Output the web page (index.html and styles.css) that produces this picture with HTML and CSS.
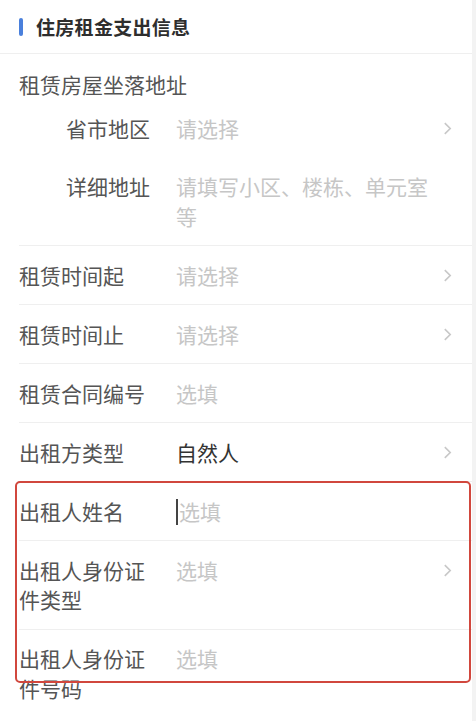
FILE: index.html
```html
<!DOCTYPE html>
<html lang="zh-CN">
<head>
    <meta charset="UTF-8">
    <meta name="viewport" content="width=device-width, initial-scale=1.0">
    <title>住房租金支出信息</title>
    <link rel="stylesheet" href="styles.css">
</head>
<body>
    <div class="panel">
        <div class="section-head">
            <span class="bar"></span>
            <h3>住房租金支出信息</h3>
        </div>

        <div class="form">
            <div class="group">
                <div class="group-title">租赁房屋坐落地址</div>
                <div class="row sub">
                    <div class="label">省市地区</div>
                    <div class="value placeholder">请选择</div>
                    <div class="arrow"><svg viewBox="0 0 10 16"><path d="M2 2l6 6-6 6"/></svg></div>
                </div>
                <div class="row sub">
                    <div class="label">详细地址</div>
                    <div class="value placeholder">请填写小区、楼栋、单元室等</div>
                    <div class="arrow"></div>
                </div>
            </div>

            <div class="row">
                <div class="label">租赁时间起</div>
                <div class="value placeholder">请选择</div>
                <div class="arrow"><svg viewBox="0 0 10 16"><path d="M2 2l6 6-6 6"/></svg></div>
            </div>
            <div class="row">
                <div class="label">租赁时间止</div>
                <div class="value placeholder">请选择</div>
                <div class="arrow"><svg viewBox="0 0 10 16"><path d="M2 2l6 6-6 6"/></svg></div>
            </div>
            <div class="row">
                <div class="label">租赁合同编号</div>
                <div class="value placeholder">选填</div>
                <div class="arrow"></div>
            </div>
            <div class="row">
                <div class="label">出租方类型</div>
                <div class="value">自然人</div>
                <div class="arrow"><svg viewBox="0 0 10 16"><path d="M2 2l6 6-6 6"/></svg></div>
            </div>
            <div class="row">
                <div class="label">出租人姓名</div>
                <div class="value placeholder"><span class="caret"></span>选填</div>
                <div class="arrow"></div>
            </div>
            <div class="row">
                <div class="label">出租人身份证件类型</div>
                <div class="value placeholder">选填</div>
                <div class="arrow"><svg viewBox="0 0 10 16"><path d="M2 2l6 6-6 6"/></svg></div>
            </div>
            <div class="row last">
                <div class="label">出租人身份证件号码</div>
                <div class="value placeholder">选填</div>
                <div class="arrow"></div>
            </div>
        </div>

        <div class="highlight"></div>
    </div>
</body>
</html>
```

FILE: styles.css
```css
body {
    margin: 0;
    background-color: #f3f3f3;
    font-family: "Noto Sans CJK SC", "Noto Sans", sans-serif;
}
.panel {
    position: relative;
    width: 472px;
    min-height: 721px;
    background-color: #fff;
}
.section-head {
    display: flex;
    align-items: center;
    height: 53px;
    padding-left: 19px;
    border-bottom: 1px solid #efefef;
}
.section-head .bar {
    width: 4px;
    height: 18px;
    border-radius: 2px;
    background-color: #4a80dc;
    margin-right: 13px;
}
.section-head h3 {
    margin: 0;
    font-size: 19px;
    font-weight: bold;
    color: #2e2e2e;
    letter-spacing: 0.3px;
}
.form {
    padding-left: 19px;
    font-size: 21px;
    line-height: 29.5px;
    color: #555;
}
.group {
    border-bottom: 1px solid #efefef;
}
.group-title {
    padding-top: 16px;
}
.row {
    display: flex;
    align-items: flex-start;
    padding: 14.5px 16px 14px 0;
    border-bottom: 1px solid #efefef;
}
.group .row {
    border-bottom: none;
}
.row.sub {
    padding-left: 47px;
}
.row.last {
    border-bottom: none;
}
.label {
    width: 132px;
    flex-shrink: 0;
    margin-right: 25px;
}
.row.sub .label {
    width: 85px;
}
.value {
    flex: 1;
    color: #333;
}
.value.placeholder {
    color: #c6c6c6;
}
.caret {
    display: inline-block;
    width: 2px;
    height: 26px;
    margin-right: 1px;
    vertical-align: -5px;
    background-color: #444;
}
.arrow {
    width: 24px;
    height: 29.5px;
    display: flex;
    align-items: center;
    justify-content: flex-end;
}
.arrow svg {
    width: 9px;
    height: 15px;
    margin-right: 4px;
}
.arrow path {
    fill: none;
    stroke: #c8c8c8;
    stroke-width: 1.8;
}
.highlight {
    position: absolute;
    left: 15px;
    top: 481px;
    width: 452px;
    height: 198px;
    border: 2.5px solid #d1473d;
    border-radius: 5px;
}
```
